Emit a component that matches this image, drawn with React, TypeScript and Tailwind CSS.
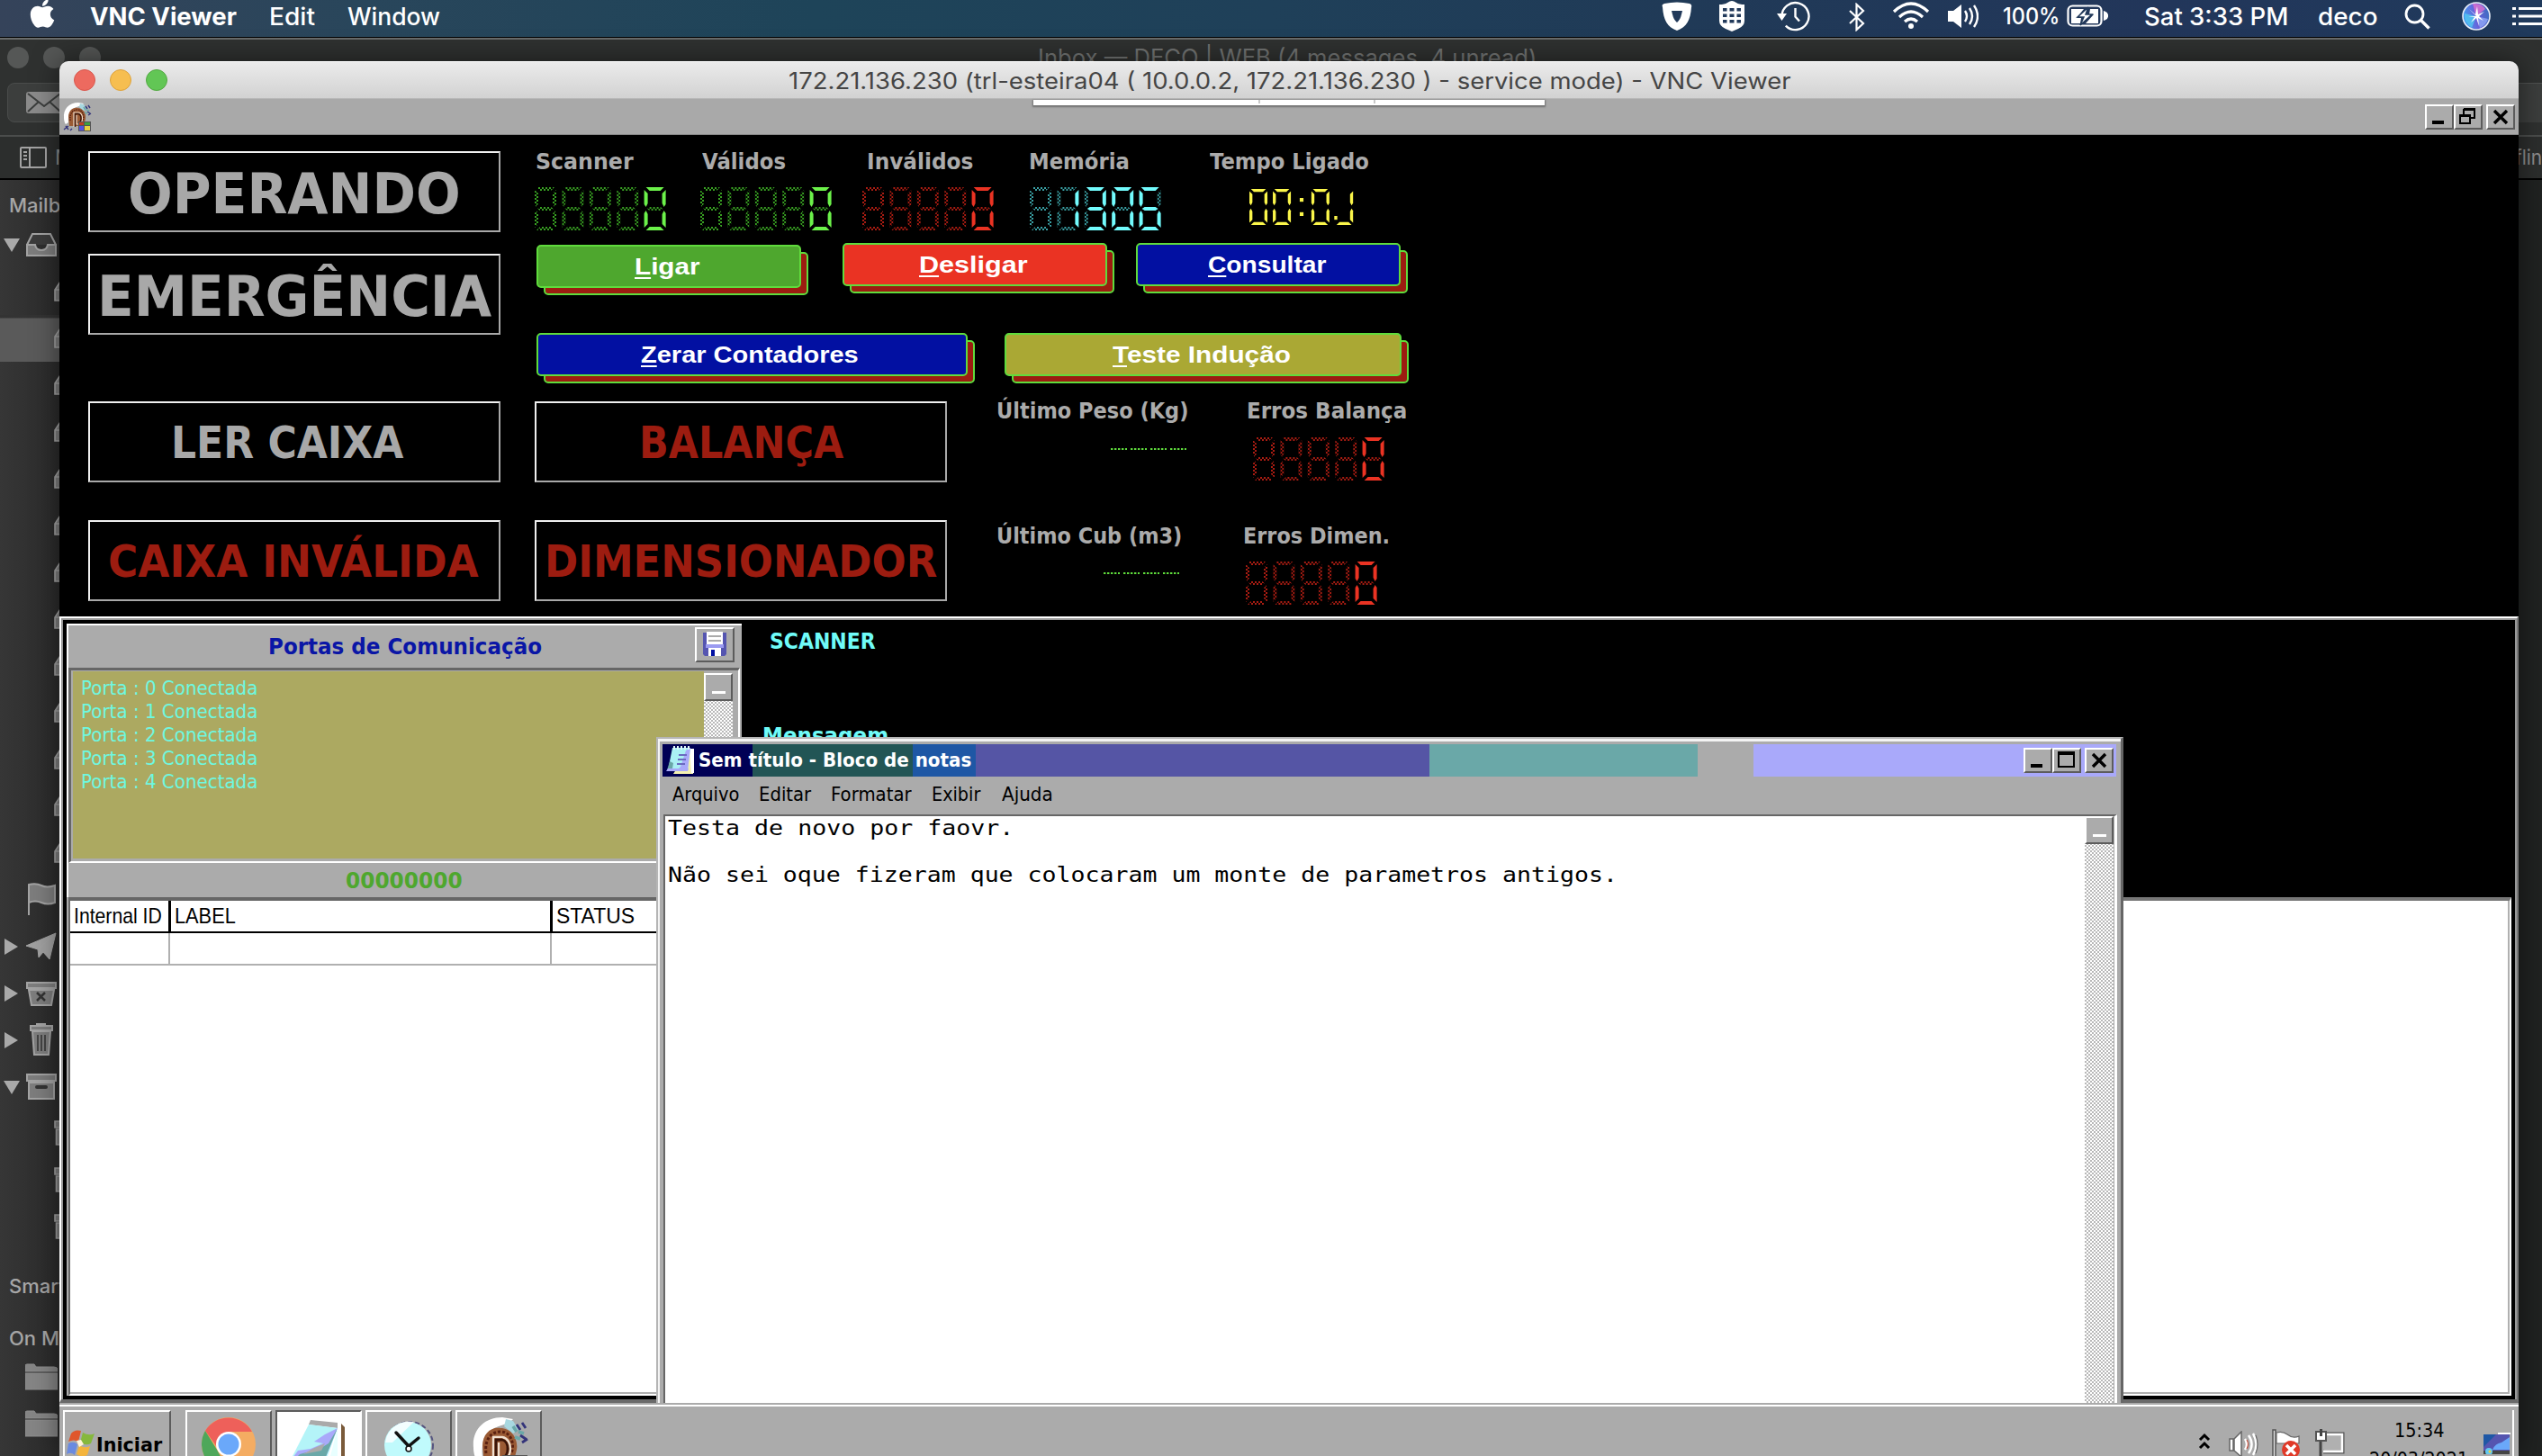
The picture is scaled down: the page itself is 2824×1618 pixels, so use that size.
import React, { useLayoutEffect, useRef, useState } from "react";
import { FaApple } from "react-icons/fa";

/* Text stretched horizontally to fill the width of its box. */
function Fit({ className = "", children }: { className?: string; children: React.ReactNode }) {
  const outer = useRef<HTMLSpanElement>(null);
  const inner = useRef<HTMLSpanElement>(null);
  const [scale, setScale] = useState(1);
  useLayoutEffect(() => {
    if (outer.current && inner.current && inner.current.offsetWidth > 0) {
      setScale(outer.current.clientWidth / inner.current.offsetWidth);
    }
  }, []);
  return (
    <span ref={outer} className={"block shrink-0 whitespace-nowrap " + className}>
      <span ref={inner} className="inline-block origin-left" style={{ transform: `scaleX(${scale})` }}>
        {children}
      </span>
    </span>
  );
}

const TAHOMA = "font-['DejaVu_Sans',sans-serif]";
const ARIAL = "font-['Liberation_Sans',sans-serif]";

/* ---------- seven segment displays ---------- */

const SEGMENTS: Record<string, string> = {
  a: "2,0 22,0 18,4 6,4",
  b: "24,3 24,19 22,22 20,18 20,7",
  c: "24,29 24,45 20,41 20,30 22,26",
  d: "6,44 18,44 22,48 2,48",
  e: "0,29 2,26 4,30 4,41 0,45",
  f: "0,3 4,7 4,18 2,22 0,19",
  g: "6,22 18,22 21,24 18,26 6,26 3,24",
};
const GLYPHS: Record<string, string> = {
  " ": "",
  "0": "abcdef",
  "1": "bc",
  "3": "abcdg",
  "6": "acdefg",
  J: "bcd",
};

function Digits({ value, on, off, className = "w-[147px] h-[48px]" }: { value: string; on: string; off: string; className?: string }) {
  const id = "dither" + off.slice(1);
  return (
    <svg viewBox="0 0 147 48" className={"block " + className} preserveAspectRatio="none">
      <defs>
        <pattern id={id} width="4" height="4" patternUnits="userSpaceOnUse">
          <rect width="2" height="2" fill={off} />
          <rect x="2" y="2" width="2" height="2" fill={off} />
        </pattern>
      </defs>
      {value.split("").map((ch, i) => (
        <g key={i} transform={`translate(${i * 30.4} 0)`}>
          {Object.keys(SEGMENTS).map((s) => (
            <polygon key={s} points={SEGMENTS[s]} fill={GLYPHS[ch].includes(s) ? on : `url(#${id})`} />
          ))}
        </g>
      ))}
    </svg>
  );
}

function Clock() {
  const cells: [number, string][] = [
    [0, "0"],
    [31.2, "0"],
    [82.5, "0"],
    [114, "J"],
  ];
  return (
    <svg viewBox="0 0 139 48" className="mt-[2px] ml-[44px] block h-[40px] w-[116px]" preserveAspectRatio="none">
      {cells.map(([x, ch]) => (
        <g key={x} transform={`translate(${x} 0)`} fill="#fbf64a">
          {GLYPHS[ch].split("").map((s) => (
            <polygon key={s} points={SEGMENTS[s]} />
          ))}
        </g>
      ))}
      <rect x="67" y="12" width="5" height="5" fill="#fbf64a" />
      <rect x="67" y="31" width="5" height="5" fill="#fbf64a" />
      <rect x="113" y="36" width="4" height="5" fill="#fbf64a" />
    </svg>
  );
}

function Dashes({ className }: { className: string }) {
  return (
    <svg viewBox="0 0 84 2" className={"block h-[2px] w-[84px] " + className}>
      {[0, 22, 44, 66].map((x) => (
        <path key={x} d={`M${x} 1h18`} stroke="#5fdc3c" strokeWidth="2" strokeDasharray="2.4 1.6" />
      ))}
    </svg>
  );
}

/* ---------- control panel pieces ---------- */

function Box({ className = "", children }: { className?: string; children: React.ReactNode }) {
  return (
    <div
      className={
        "flex h-[90px] w-[458px] shrink-0 items-center border-2 border-t-[#f0f0f0] border-r-[#a8a8a8] border-b-[#a8a8a8] border-l-[#f0f0f0] font-bold leading-[80px] " +
        TAHOMA +
        " " +
        className
      }
    >
      {children}
    </div>
  );
}

function Label({ className = "", children }: { className?: string; children: React.ReactNode }) {
  return <Fit className={"h-[30px] text-[25px] leading-[31px] font-bold text-[#ababab] " + TAHOMA + " " + className}>{children}</Fit>;
}

function PushButton({ face, pos = "", size, text, hot, rest }: { face: string; pos?: string; size: string; text: string; hot: string; rest: string }) {
  return (
    <div className={"relative h-[48px] shrink-0 " + size + " " + pos}>
      <div className={"absolute top-[8px] left-[8px] h-[48px] rounded-[5px] border-2 border-[#5fdc3c] bg-[#9c1c10] " + size} />
      <div className={"relative flex h-[48px] items-center rounded-[5px] border-2 border-[#5fdc3c] text-[26px] leading-[48px] font-bold text-white " + ARIAL + " " + size + " " + face}>
        <Fit className={text}>
          <span className="underline decoration-2 underline-offset-[3px]">{hot}</span>
          {rest}
        </Fit>
      </div>
    </div>
  );
}

const RAISED = "border-2 border-t-white border-l-white border-r-[#5c5c5c] border-b-[#5c5c5c] bg-[#ababab]";
const CHECKER = "bg-[repeating-conic-gradient(#ffffff_0_25%,#b8b8b8_0_50%)] bg-[length:4px_4px]";

function WinButton({ kind, className = "" }: { kind: "min" | "max" | "restore" | "close"; className?: string }) {
  return (
    <div className={"h-[28px] w-[32px] shrink-0 " + RAISED + " " + className}>
      <svg viewBox="0 0 28 24" className="block h-full w-full" fill="none" stroke="#000">
        {kind === "min" && <path d="M6 18h13" strokeWidth="4" />}
        {kind === "max" && (
          <>
            <rect x="5" y="3" width="17" height="16" strokeWidth="2" />
            <path d="M4 4h19" strokeWidth="4" />
          </>
        )}
        {kind === "restore" && (
          <>
            <path d="M9 9V4h12v9h-4M8 4h14" strokeWidth="2" />
            <path d="M9 3.5h13" strokeWidth="3" />
            <rect x="5" y="10" width="11" height="9" strokeWidth="2" />
            <path d="M4 10.500h13" strokeWidth="3" />
          </>
        )}
        {kind === "close" && <path d="M7 5l14 14M21 5L7 19" strokeWidth="3.400" />}
      </svg>
    </div>
  );
}

function ScrollButton() {
  return (
    <div className={"flex h-[31px] w-[32px] items-end justify-center pb-[6px] " + RAISED}>
      <div className="h-[3px] w-[15px] bg-white" />
    </div>
  );
}

/* White head silhouette around a brown swirl, with a small colour grid. */
function AppIcon({ className }: { className: string }) {
  return (
    <svg viewBox="0 0 32 32" className={className}>
      <path d="M17 0C7 0 0 7 1 17c0 3 1 6 2 7l3-2c-1-8 2-15 9-17l6-2 2-2z" fill="#fff" />
      <path d="M19 1l4 1 3 5-3 2-5-4z" fill="#a8d8e0" />
      <path d="M6 16C6 9 11 5 16 6c6 0 10 6 9 12l-2 8H7z" fill="#9a5a34" />
      <path d="M8 20c-1-8 3-12 8-12 6 0 8 7 6 12" fill="none" stroke="#5a2010" strokeWidth="1.500" strokeDasharray="1.500 1" />
      <path d="M12 27V11h5c6 1 6 12 0 13h-2V14" fill="none" stroke="#f0e0d0" strokeWidth="1.200" />
      <path d="M13.500 27V12.500h3.500c4 1 4 9 0 10" fill="none" stroke="#3a1408" strokeWidth="1.400" />
      <path d="M25 4l2 3M28 3l2 3M27 10l3 2M28 14l3-2M3 26l3 4M1 30l5-4M8 31l2-2" stroke="#33337a" strokeWidth="1.400" />
      <path d="M23 5l2 3M26 8l3 1M24 11l3 1" stroke="#6aa8a8" strokeWidth="1.800" />
      <rect x="17" y="21" width="14" height="11" fill="#555" />
      <rect x="18" y="26" width="5" height="5" fill="#5555e0" />
      <rect x="24" y="22" width="6" height="3" fill="#3fa040" />
      <rect x="24" y="26" width="6" height="5" fill="#e8d040" />
      <rect x="18" y="22" width="5" height="3" fill="#c04020" />
    </svg>
  );
}

/* ---------- macOS menu bar ---------- */

function MenuBar() {
  return (
    <div className="flex h-[42px] items-start border-b border-black bg-[linear-gradient(90deg,#35435a_0%,#29465b_14%,#1e4459_32%,#1f4059_50%,#203a57_66%,#22365a_85%,#203a5c_100%)] font-['Inter',sans-serif] text-[27px] leading-[37px] font-medium text-white">
      <FaApple className="-mt-[3px] ml-[29px] h-[36px] w-[36px] shrink-0" />
      <Fit className="ml-[35px] w-[163px] font-bold">VNC Viewer</Fit>
      <Fit className="ml-[36px] w-[51px]">Edit</Fit>
      <Fit className="ml-[36px] w-[103px]">Window</Fit>
      <svg viewBox="0 0 34 34" className="mt-[2px] ml-[1357px] h-[34px] w-[34px] shrink-0">
        <path d="M3 2Q17-1 31 2q3 1 2 4C32 20 28 28 17 32 6 28 2 20 1 6 0 3 1 3 3 2z" fill="#fff" />
        <path d="M11 10h12l-1 4c-1 4-2 6-5 9-3-3-4-5-5-9z" fill="#21395a" />
      </svg>
      <svg viewBox="0 0 30 36" className="ml-[29px] h-[36px] w-[30px] shrink-0">
        <path d="M1 5q6 0 9-2 3-2 5-2t5 2q3 2 9 2v18q0 6-7 9l-7 3-7-3q-7-3-7-9z" fill="#fff" />
        <path d="M5 9h4.500v3.500H5zM12.500 9h5v3.500h-5zM20.500 9H25v3.500h-4.500zM5 15.500h4.500V19H5zM12.500 15.500h5V19h-5zM20.500 15.500H25V19h-4.500zM5 22h4.500v3.500H5zM12.500 22h5v3.500h-5zM20.500 22H25v3.500h-4.500z" fill="#21395a" />
      </svg>
      <svg viewBox="0 0 38 34" className="mt-[1px] ml-[35px] h-[34px] w-[38px] shrink-0" fill="none" stroke="#fff" strokeWidth="2.400">
        <path d="M5.500 17A15 15 0 1 1 9.800 27.600" />
        <path d="M20.500 8v9.500l4.500 5" />
        <path d="M0 14h11l-5.500 8z" fill="#fff" stroke="none" />
      </svg>
      <svg viewBox="0 0 20 32" className="mt-[3px] ml-[41px] h-[32px] w-[20px] shrink-0" fill="none" stroke="#fff" strokeWidth="2.200">
        <path d="M2 9l15 14-7.500 7V2l7.500 7L2 23" />
      </svg>
      <svg viewBox="0 0 42 32" className="mt-[1px] ml-[29px] h-[32px] w-[42px] shrink-0" fill="none" stroke="#fff" strokeWidth="3.200">
        <path d="M2 12Q21-6 40 12M8 18q13-12 26 0M14 23q7-6 14 0" />
        <circle cx="21" cy="28" r="3" fill="#fff" stroke="none" />
      </svg>
      <svg viewBox="0 0 34 28" className="mt-[4px] ml-[20px] h-[28px] w-[34px] shrink-0" fill="none" stroke="#fff" strokeWidth="2.400">
        <path d="M0 8h6l9-7v26l-9-7H0z" fill="#fff" stroke="none" />
        <path d="M19 8q4 6 0 12M24 5q6 9 0 18M29 2q8 12 0 24" />
      </svg>
      <Fit className="ml-[27px] w-[63px] text-[25px]">100%</Fit>
      <svg viewBox="0 0 46 26" className="mt-[5px] ml-[8px] h-[26px] w-[46px] shrink-0" fill="none" stroke="#fff" strokeWidth="2.200">
        <rect x="1.500" y="1.500" width="37" height="22" rx="5" />
        <path d="M42 8.500q3 1 3 4t-3 4z" fill="#fff" />
        <path d="M5 5h14l-8 10h5l-1 6H5zM35 5h-9l-1 6h5l-9 10h14z" fill="#fff" stroke="none" />
        <path d="M24 3L12 14h7l-4 9 13-12h-7z" fill="#fff" stroke="#21395a" strokeWidth="1.500" />
      </svg>
      <Fit className="ml-[40px] w-[160px]">Sat 3:33 PM</Fit>
      <Fit className="ml-[33px] w-[66px]">deco</Fit>
      <svg viewBox="0 0 30 30" className="mt-[4px] ml-[30px] h-[30px] w-[30px] shrink-0" fill="none" stroke="#fff" strokeWidth="2.800">
        <circle cx="11.500" cy="11.500" r="9.500" />
        <path d="M18.500 18.500l9 9" strokeWidth="3.400" />
      </svg>
      <svg viewBox="0 0 32 32" className="mt-[2px] ml-[34px] h-[32px] w-[32px] shrink-0">
        <defs>
          <linearGradient id="siri" x1="0" y1="0.500" x2="1" y2="0.300">
            <stop offset="0" stopColor="#3f9ef0" />
            <stop offset="0.500" stopColor="#6a5fd8" />
            <stop offset="1" stopColor="#3a6fc0" />
          </linearGradient>
        </defs>
        <circle cx="16" cy="16" r="15" fill="url(#siri)" stroke="#e8eef8" strokeWidth="1.600" />
        <path d="M12 2q10-1 14 6l-10 8z" fill="#e070d0" opacity=".8" />
        <path d="M16 16L3 13q-1 10 8 16z" fill="#52c8f0" opacity=".8" />
        <path d="M16 16l4 13q7-3 9-10z" fill="#8fa8f8" opacity=".8" />
        <path d="M16 16L8 8l7 6 2-9 1 9 7-3-6 5 5 5-6-3 1 9-3-9-6 5 4-6-7-1z" fill="#fff" />
      </svg>
      <svg viewBox="0 0 34 24" className="mt-[7px] ml-[24px] h-[24px] w-[34px] shrink-0" stroke="#fff" strokeWidth="3">
        <path d="M0 2.500h4M7 2.500h27M0 11h4M7 11h27M0 19.500h4M7 19.500h27" />
      </svg>
    </div>
  );
}

/* ---------- mail window in the background ---------- */

function Caret({ dir }: { dir?: "down" | "right" }) {
  return (
    <svg viewBox="0 0 18 18" className="ml-[4px] h-[18px] w-[18px] shrink-0" fill="#a9a9a9">
      {dir === "down" && <path d="M0 2h18L9 17z" />}
      {dir === "right" && <path d="M1 0l15 9-15 9z" />}
    </svg>
  );
}

function SideIcon({ kind }: { kind: string }) {
  return (
    <svg viewBox="0 0 36 38" className="ml-[6px] h-[38px] w-[36px] shrink-0" fill="#7d7d7d" stroke="#a3a3a3" strokeWidth="2">
      {kind === "inbox" && (
        <>
          <path d="M2 19L8 7h20l6 12" fill="#3c3c3c" />
          <path d="M2 19h9q1 6 7 6t7-6h9v12H2z" />
        </>
      )}
      {kind === "flag" && <path d="M4 36V2q8-2 14 1t15 0v19q-8 3-15 0t-14 0" />}
      {kind === "plane" && <path d="M1 18L34 4l-7 29-7-8-5 6-1-9zM14 22L34 4" fill="#a0a0a0" strokeWidth="1" />}
      {kind === "junk" && (
        <>
          <path d="M2 7h32v6H2zM4 15h28l-3 17H7z" />
          <path d="M13 18l9 9M22 18l-9 9" stroke="#333" strokeWidth="2.500" />
        </>
      )}
      {kind === "trash" && (
        <>
          <path d="M13 3V1h9v2M6 3h24v5H6zM8 9h20l-2 26H10z" />
          <path d="M14 13v18M18 13v18M22 13v18" stroke="#444" />
        </>
      )}
      {kind === "archive" && (
        <>
          <path d="M2 5h32v7H2zM4 14h28v18H4z" />
          <path d="M13 19h10" stroke="#333" strokeWidth="4" strokeLinecap="round" />
        </>
      )}
      {kind === "folder" && <path d="M0 12V6q0-2 2-2h8l2 3h20q4 0 4 3v2zM0 14h36v18H0z" fill="#858585" stroke="#8e8e8e" strokeWidth="1" />}
    </svg>
  );
}

function SideRow({ caret, icon }: { caret?: "down" | "right"; icon: string }) {
  return (
    <div className="flex h-[52px] w-[66px] shrink-0 items-center overflow-hidden">
      <Caret dir={caret} />
      <SideIcon kind={icon} />
    </div>
  );
}

function SubRow({ selected, archive }: { selected?: boolean; archive?: boolean }) {
  return (
    <div className={"flex h-[52px] w-[66px] shrink-0 items-center justify-end " + (selected ? "bg-[linear-gradient(180deg,#333_3px,#5a5a5a_4px,#5a5a5a)]" : "")}>
      <svg viewBox="0 0 6 30" className="h-[30px] w-[6px]" fill="#7d7d7d" stroke="#a3a3a3" strokeWidth="1.600">
        {archive ? <path d="M8 1H1v7h7M8 10H2.500v17H8" /> : <path d="M7 4L1 13v12h7M1 13h6" />}
      </svg>
    </div>
  );
}

function MailWindow() {
  const heading = "ml-[10px] font-['Inter',sans-serif] text-[22px] leading-[30px] font-medium text-[#a6a6a6] whitespace-nowrap";
  return (
    <div className="flex h-[1576px] flex-col border-t-2 border-[#6a6c6b] bg-[#2f3130]">
      <div className="flex h-[46px] shrink-0 items-start justify-between">
        <div className="mt-[8px] ml-[8px] flex gap-[16px]">
          <div className="h-[24px] w-[24px] rounded-full bg-[#555756]" />
          <div className="h-[24px] w-[24px] rounded-full bg-[#555756]" />
          <div className="h-[24px] w-[24px] rounded-full bg-[#555756]" />
        </div>
        <Fit className="mt-[5px] mr-[1117px] w-[554px] font-['Inter',sans-serif] text-[25px] leading-[30px] text-[#727473]">Inbox — DECO | WEB (4 messages, 4 unread)</Fit>
      </div>
      <div className="mt-[2px] flex h-[44px] shrink-0 justify-between">
        <div className="ml-[8px] flex w-[80px] items-center rounded-l-[8px] border border-[#4a4c4b] bg-[#3c3e3d] pl-[20px]">
          <svg viewBox="0 0 40 24" className="h-[24px] w-[40px]">
            <rect width="40" height="24" rx="3" fill="#8b8b8b" />
            <path d="M2 2l18 14L38 2M2 22l12-11M38 22L26 11" fill="none" stroke="#3c3e3d" strokeWidth="2" />
          </svg>
        </div>
        <div className="w-[80px] border-t border-[#505251] bg-[#3c3e3d]" />
      </div>
      <div className="mt-[14px] flex h-[50px] shrink-0 items-center justify-between border-t-2 border-b-2 border-t-[#4b4d4c] border-b-black bg-[#2c2e2d] font-['Inter',sans-serif] text-[23px] text-[#8c8c8c]">
        <div className="flex items-center gap-[9px] pl-[22px]">
          <svg viewBox="0 0 30 24" className="h-[24px] w-[30px]" fill="none" stroke="#a3a3a3" strokeWidth="2">
            <rect x="1" y="1" width="28" height="22" rx="1" />
            <path d="M11 1v22M4 6h4M4 10h4M4 14h4" />
          </svg>
          <span>M</span>
        </div>
        <Fit className="w-[30px]">flin</Fit>
      </div>
      <div className="flex flex-1">
        <div className="flex w-[66px] flex-col overflow-hidden bg-[linear-gradient(90deg,#363636,#2b2b2b)]">
          <div className="h-[46px] shrink-0 pt-[13px]">
            <div className={heading}>Mailboxes</div>
          </div>
          <SideRow caret="down" icon="inbox" />
          <SubRow />
          <SubRow selected />
          {Array.from({ length: 11 }, (_, i) => (
            <SubRow key={i} />
          ))}
          <SideRow icon="flag" />
          <SideRow caret="right" icon="plane" />
          <SideRow caret="right" icon="junk" />
          <SideRow caret="right" icon="trash" />
          <SideRow caret="down" icon="archive" />
          <SubRow archive />
          <SubRow archive />
          <SubRow archive />
          <div className={"mt-[24px] shrink-0 " + heading}>Smart Mailboxes</div>
          <div className={"mt-[28px] shrink-0 " + heading}>On My Mac</div>
          <div className="h-[3px] shrink-0" />
          <SideRow icon="folder" />
          <SideRow icon="folder" />
        </div>
        <div className="flex-1 bg-[#202221]" />
      </div>
    </div>
  );
}

/* ---------- control panel ---------- */

function ControlPanel() {
  const gray = "text-[#a8a8a8]";
  const red = "text-[#9c1c10]";
  return (
    <div className="flex h-[535px] shrink-0 bg-black pl-[32px]">
      <div className="w-[458px] shrink-0 pt-[18px]">
        <Box className={"pt-[5px] pl-[42px] text-[63px] " + gray}>
          <Fit className="w-[370px]">OPERANDO</Fit>
        </Box>
        <Box className={"mt-[24px] pt-[5px] pl-[8px] text-[63px] " + gray}>
          <Fit className="w-[438px]">EMERGÊNCIA</Fit>
        </Box>
        <Box className={"mt-[74px] pt-[3px] pl-[90px] text-[49px] " + gray}>
          <Fit className="w-[258px]">LER CAIXA</Fit>
        </Box>
        <Box className={"mt-[42px] pt-[3px] pl-[20px] text-[49px] " + red}>
          <Fit className="w-[412px]">CAIXA INVÁLIDA</Fit>
        </Box>
      </div>
      <div className="ml-[38px] flex flex-col">
        <div className="mt-[14px] grid h-[106px] grid-cols-[184px_180px_186px_200px_200px] grid-rows-[44px_48px]">
          <Label className="ml-px w-[109px]">Scanner</Label>
          <Label className="ml-[2px] w-[93px]">Válidos</Label>
          <Label className="ml-[5px] w-[118px]">Inválidos</Label>
          <Label className="-ml-px w-[112px]">Memória</Label>
          <Label className="w-[177px]">Tempo Ligado</Label>
          <Digits value="    0" on="#6cf24a" off="#38a022" />
          <Digits value="    0" on="#6cf24a" off="#38a022" />
          <Digits value="    0" on="#ea3323" off="#a81c12" />
          <Digits value=" 1306" on="#72fbfd" off="#3aa0a4" />
          <Clock />
        </div>
        <div className="ml-[2px] flex h-[100px]">
          <PushButton face="bg-[#4ea72e]" pos="mt-[2px]" size="w-[294px]" text="ml-[107px] w-[73px]" hot="L" rest="igar" />
          <PushButton face="bg-[#ea3323]" pos="ml-[46px]" size="w-[294px]" text="ml-[83px] w-[121px]" hot="D" rest="esligar" />
          <PushButton face="bg-[#0210a2]" pos="ml-[32px]" size="w-[294px]" text="ml-[78px] w-[131px]" hot="C" rest="onsultar" />
        </div>
        <div className="ml-[2px] flex h-[76px]">
          <PushButton face="bg-[#0210a2]" size="w-[479px]" text="ml-[114px] w-[242px]" hot="Z" rest="erar Contadores" />
          <PushButton face="bg-[#aaa834]" pos="ml-[41px]" size="w-[441px]" text="ml-[118px] w-[198px]" hot="T" rest="este Indução" />
        </div>
        <div className="flex h-[132px]">
          <Box className={"pt-[3px] pl-[114px] text-[49px] " + red}>
            <Fit className="w-[227px]">BALANÇA</Fit>
          </Box>
          <div className="-mt-[5px] ml-[55px] w-[278px]">
            <Label className="w-[213px]">Último Peso (Kg)</Label>
            <Dashes className="mt-[27px] ml-[127px]" />
          </div>
          <div className="-mt-[5px]">
            <Label className="w-[178px]">Erros Balança</Label>
            <Digits value="    0" on="#ea3323" off="#a81c12" className="mt-[15px] ml-[7px] h-[48px] w-[147px]" />
          </div>
        </div>
        <div className="flex">
          <Box className={"pt-[3px] pl-[9px] text-[49px] " + red}>
            <Fit className="w-[436px]">DIMENSIONADOR</Fit>
          </Box>
          <div className="mt-[2px] ml-[55px] w-[273px]">
            <Label className="w-[206px]">Último Cub (m3)</Label>
            <Dashes className="mt-[26px] ml-[119px]" />
          </div>
          <div className="mt-[2px]">
            <Label className="ml-px w-[163px]">Erros Dimen.</Label>
            <Digits value="    0" on="#ea3323" off="#a81c12" className="mt-[14px] ml-[4px] h-[48px] w-[147px]" />
          </div>
        </div>
      </div>
    </div>
  );
}

/* ---------- ports panel, table and message list ---------- */

function PortsPanel() {
  return (
    <div className="flex h-[858px] w-[750px] shrink-0 flex-col bg-[#ababab]">
      <div className="flex h-[304px] flex-col border-t-2 border-l-2 border-white">
        <div className="flex h-[47px] shrink-0 items-center">
          <Fit className={"ml-[222px] w-[304px] text-[25px] leading-[40px] font-bold text-[#0a16a6] " + TAHOMA}>Portas de Comunicação</Fit>
          <div className={"-mt-[5px] ml-[170px] flex h-[39px] w-[44px] items-center justify-center " + RAISED}>
            <svg viewBox="0 0 26 28" className="h-[28px] w-[26px]">
              <path d="M0 1h4v12h18V1h4v24l-2 2H2l-2-2z" fill="#5555b0" />
              <rect x="4" width="18" height="14" fill="#fff" />
              <path d="M6 5h14M6 10h14" stroke="#aaa" strokeWidth="2" />
              <rect x="3" y="14" width="20" height="4" fill="#9a9af0" />
              <rect x="6" y="18" width="14" height="9" fill="#fff" />
              <rect x="9" y="20" width="4" height="7" fill="#0210a2" />
            </svg>
          </div>
        </div>
        <div className="mr-[2px] flex h-[217px] shrink-0 border-t-[3px] border-r-2 border-b-2 border-l-[3px] border-t-[#666] border-r-white border-b-white border-l-[#666]">
          <div className="mt-[1px] mb-[3px] ml-[2px] flex-1 bg-[#aca961] pt-[6px] pl-[9px]">
            {[0, 1, 2, 3, 4].map((n) => (
              <Fit key={n} className={"w-[196px] text-[22px] leading-[26px] text-[#6ef8e0] " + TAHOMA}>
                Porta : {n} Conectada
              </Fit>
            ))}
          </div>
          <div className={"mt-[3px] mr-[6px] w-[32px] " + CHECKER}>
            <ScrollButton />
          </div>
        </div>
        <Fit className={"ml-[308px] w-[130px] text-[24px] leading-[40px] font-bold text-[#4ea72e] " + TAHOMA}>00000000</Fit>
      </div>
      <div className="ml-[2px] flex flex-1 flex-col border-t-[4px] border-b-2 border-l-2 border-t-[#666] border-b-white border-l-[#666] bg-white">
        <div className={"flex h-[36px] shrink-0 border-b-2 border-black text-[24px] leading-[33px] text-black " + ARIAL}>
          <div className="w-[112px] border-r-[3px] border-black pl-[4px]">
            <Fit className="w-[98px]">Internal ID</Fit>
          </div>
          <div className="w-[424px] border-r-[3px] border-black pl-[4px]">
            <Fit className="w-[68px]">LABEL</Fit>
          </div>
          <div className="pl-[4px]">
            <Fit className="w-[87px]">STATUS</Fit>
          </div>
        </div>
        <div className="flex h-[36px] shrink-0 border-b-2 border-[#b0b0b0]">
          <div className="w-[111px] border-r-2 border-[#b0b0b0]" />
          <div className="w-[424px] border-r-2 border-[#b0b0b0]" />
        </div>
        <div className="flex-1 border-b-2 border-[#b0b0b0]" />
      </div>
    </div>
  );
}

function Notepad() {
  return (
    <div className="absolute top-[134px] left-[663px] flex h-[740px] w-[1630px] flex-col border-t-2 border-r-[3px] border-l-2 border-t-[#b5b5b5] border-r-[#666] border-l-[#b5b5b5] bg-[#ababab]">
      <div className="flex flex-1 flex-col border-t-[3px] border-l-2 border-[#f4f4f4] pl-[3px]">
        <div className="mt-[3px] mr-[5px] flex h-[36px] shrink-0 items-center bg-[linear-gradient(90deg,#000055_100px,#225555_100px_278px,#1e57a5_278px_348px,#5555a5_348px_852px,#6aa8a8_852px_1150px,#ababab_1150px_1212px,#a9a9fa_1212px)]">
          <svg viewBox="0 0 32 34" className="ml-[4px] h-[34px] w-[32px] shrink-0">
            <path d="M8 32h22V4h-4z" fill="#f4f0b0" />
            <path d="M26 4h5v27h-3z" fill="#fff" />
            <path d="M2 28L7 3h20l-3 25z" fill="#aaf0f4" />
            <path d="M27 3l-3 25H12l4-4 6-18z" fill="#a9a9fa" />
            <path d="M4 18l-3 10 6-2 1-6z" fill="#6aa8a8" />
            <path d="M0 29h24l1-3H2z" fill="#a9a9fa" />
            <path d="M14 11h9M13 16h9M12 21h9" stroke="#6a6ac0" strokeWidth="2" />
            <path d="M9 5V1M13 5V1M17 5V1M21 5V1M25 5V1" stroke="#e0f8f8" strokeWidth="2" />
          </svg>
          <Fit className={"ml-[4px] w-[303px] text-[21px] leading-[34px] font-bold text-white " + TAHOMA}>Sem título - Bloco de notas</Fit>
          <div className="mr-[3px] ml-auto flex">
            <WinButton kind="min" />
            <WinButton kind="max" />
            <WinButton kind="close" className="ml-[4px]" />
          </div>
        </div>
        <div className={"flex h-[42px] shrink-0 pt-[3px] text-[21px] leading-[34px] text-black " + TAHOMA}>
          <Fit className="ml-[11px] w-[74px]">Arquivo</Fit>
          <Fit className="ml-[22px] w-[58px]">Editar</Fit>
          <Fit className="ml-[22px] w-[90px]">Formatar</Fit>
          <Fit className="ml-[22px] w-[54px]">Exibir</Fit>
          <Fit className="ml-[24px] w-[57px]">Ajuda</Fit>
        </div>
        <div className="mr-[4px] ml-[1px] flex flex-1 border-t-2 border-r-[3px] border-l-2 border-t-[#666] border-r-white border-l-[#666]">
          <div className="flex-1 bg-white pl-[3px] font-['DejaVu_Sans_Mono',monospace] text-[23px] leading-[26px] text-black">
            <Fit className="w-[384px]">Testa de novo por faovr.</Fit>
            <div className="h-[26px]" />
            <Fit className="w-[1055px]">Não sei oque fizeram que colocaram um monte de parametros antigos.</Fit>
          </div>
          <div className={"mr-[1px] w-[32px] " + CHECKER}>
            <ScrollButton />
          </div>
        </div>
      </div>
    </div>
  );
}

function LowerArea() {
  return (
    <div className="relative flex h-[874px] shrink-0 border-t-2 border-r-2 border-b-[4px] border-l-2 border-t-white border-r-[#777] border-b-[#6a6a6a] border-l-white bg-black">
      <div className="flex flex-1 border-t-2 border-r-2 border-l-2 border-[#999] p-[4px]">
        <PortsPanel />
        <div className={"flex flex-1 flex-col text-[24px] leading-[30px] font-bold text-[#6ffbf8] " + TAHOMA}>
          <div className="h-[304px] shrink-0">
            <Fit className="mt-[5px] ml-[31px] w-[118px]">SCANNER</Fit>
            <Fit className="mt-[75px] ml-[23px] w-[140px]">Mensagem</Fit>
          </div>
          <div className="flex-1 border-t-[4px] border-r-2 border-b-2 border-t-[#777] border-r-white border-b-white">
            <div className="h-full border-r-2 border-b-2 border-[#b0b0b0] bg-white" />
          </div>
        </div>
      </div>
      <div className="absolute -top-[2px] -left-[2px]">
        <Notepad />
      </div>
    </div>
  );
}

/* ---------- taskbar ---------- */

function Taskbar() {
  return (
    <div className="flex h-[59px] shrink-0 overflow-hidden bg-[#ababab] pt-[2px]">
      <div className="flex flex-1 items-start border-t-2 border-white pt-[4px]">
        <div className={"ml-[4px] flex h-[60px] w-[120px] shrink-0 items-start " + RAISED}>
          <svg viewBox="0 0 32 32" className="mt-[19px] ml-[2px] h-[32px] w-[32px]">
            <path d="M5 5q4-5 11-3l-3 12q-5-3-11 0z" fill="#e0562c" />
            <path d="M18 4q7 4 13 1l-4 11q-6 3-12-1z" fill="#86b83c" />
            <path d="M2 16q6-3 10 1l-3 12q-4-4-9-1z" fill="#6a8ae0" />
            <path d="M14 18q6 4 12 1l-3 10q-6 3-12-1z" fill="#f4b43c" />
            <path d="M11 13l5-1 3 5-5 3z" fill="#fff4d8" />
          </svg>
          <Fit className={"mt-[20px] ml-[1px] w-[73px] text-[21px] leading-[34px] font-bold text-black " + TAHOMA}>Iniciar</Fit>
        </div>
        <div className={"ml-[16px] h-[60px] w-[96px] shrink-0 " + RAISED}>
          <svg viewBox="0 0 60 60" className="mt-[6px] ml-[16px] h-[60px] w-[60px]">
            <circle cx="30" cy="30" r="30" fill="#f4ac62" />
            <path d="M4 15A30 30 0 0 1 56 16H30L17 33z" fill="#ee605a" />
            <path d="M4 15L17 36 30 60A30 30 0 0 1 4 15z" fill="#4ea75a" />
            <circle cx="30" cy="30" r="14" fill="#fff" />
            <circle cx="30" cy="30" r="11.500" fill="#6aa8fa" />
          </svg>
        </div>
        <div className="ml-[4px] h-[60px] w-[96px] shrink-0 border-2 border-t-[#5c5c5c] border-r-white border-l-[#5c5c5c] bg-white">
          <svg viewBox="0 0 64 48" className="mt-[9px] ml-[13px] h-[48px] w-[64px]">
            <path d="M24 2l34 2v44h4V8l-4-4z" fill="#7a5a3a" />
            <path d="M24 0l30 3v6L22 5z" fill="#aaa" />
            <path d="M22 5l32 4-14 39H0z" fill="#b4f4f8" />
            <path d="M54 9L40 16 28 24l10 2-14 6-14 2L0 48h38z" fill="#a9a9fa" />
            <path d="M54 9L44 26 34 32 12 38 2 48h36z" fill="#6aa8a8" />
            <path d="M26 32l14-6-4 8-20 4z" fill="#aaa" />
            <path d="M54 9v39H44z" fill="#e8ffff" />
          </svg>
        </div>
        <div className={"ml-[4px] h-[60px] w-[96px] shrink-0 " + RAISED}>
          <svg viewBox="0 0 56 56" className="mt-[8px] ml-[18px] h-[56px] w-[56px]">
            <circle cx="29" cy="29" r="26" fill="none" stroke="#555580" strokeWidth="2" strokeDasharray="5 3" />
            <circle cx="27" cy="29" r="26" fill="#c0fafc" />
            <path d="M14 7a26 26 0 0 1 20-4L10 26H2q2-13 12-19z" fill="#fff" opacity=".8" />
            <path d="M14 15l14 15 11-9M28 30v4" fill="none" stroke="#111" strokeWidth="3.500" strokeLinecap="round" />
            <circle cx="28" cy="33" r="3" fill="#fff" stroke="#111" strokeWidth="1.500" />
          </svg>
        </div>
        <div className={"ml-[4px] h-[60px] w-[96px] shrink-0 " + RAISED}>
          <AppIcon className="mt-[6px] ml-[16px] h-[64px] w-[64px]" />
        </div>
        <svg viewBox="0 0 14 20" className="mt-[25px] ml-[1840px] h-[20px] w-[14px] shrink-0" fill="none" stroke="#000" strokeWidth="3">
          <path d="M2 8l5-5 5 5M2 17l5-5 5 5" />
        </svg>
        <svg viewBox="0 0 34 30" className="mt-[23px] ml-[19px] h-[30px] w-[34px] shrink-0">
          <path d="M2 9h4v13H2zM7 9l8-8v28l-8-7z" fill="#fff" stroke="#666" strokeWidth="1.500" />
          <path d="M19 9q4 6 0 12M23 5q7 10 0 20M28 3q7 12 0 24" fill="none" stroke="#fff" strokeWidth="2.500" />
          <path d="M21 10q3 5 0 10" fill="none" stroke="#c05040" strokeWidth="1.200" />
          <path d="M31 5q4 10 0 20" fill="none" stroke="#666" strokeWidth="1.200" />
        </svg>
        <svg viewBox="0 0 34 30" className="mt-[21px] ml-[14px] h-[30px] w-[34px] shrink-0">
          <path d="M2 30V1h3v29" fill="#ddd" stroke="#555" strokeWidth="1.500" />
          <path d="M6 4q7-2 12 2 6 5 13 2v8H6z" fill="#fff" stroke="#666" strokeWidth="1.200" />
          <circle cx="22" cy="23" r="10" fill="#e03a28" />
          <path d="M17 18l10 10M27 18L17 28" stroke="#fff" strokeWidth="3.500" />
        </svg>
        <svg viewBox="0 0 34 30" className="mt-[21px] ml-[14px] h-[30px] w-[34px] shrink-0">
          <path d="M12 6h19v19H10" fill="#b8b8b8" stroke="#555" strokeWidth="5" />
          <path d="M12 6h19v19H10" fill="#b0b0b0" stroke="#fff" strokeWidth="2.500" />
          <path d="M2 3h11v10H2z" fill="#fff" stroke="#555" strokeWidth="2" />
          <path d="M7.500 0v8M7 14v16" stroke="#444" strokeWidth="3" />
        </svg>
        <div className={"ml-[27px] flex shrink-0 flex-col pt-[8px] text-[21px] leading-[30px] text-black " + TAHOMA}>
          <Fit className="ml-[28px] w-[56px]">15:34</Fit>
          <Fit className="mt-[2px] w-[110px]">20/03/2021</Fit>
        </div>
        <svg viewBox="0 0 30 24" className="mt-[25px] ml-[17px] h-[24px] w-[30px] shrink-0">
          <path d="M0 2h29v18H0z" fill="#5555b0" />
          <path d="M0 2h14L0 16z" fill="#1e57a5" />
          <path d="M29 5v14H10q3-7 10-8z" fill="#6aa8fa" />
          <path d="M16 1h14" stroke="#fff" strokeWidth="2" />
          <path d="M0 20h29v4H0z" fill="#444" />
          <circle cx="6" cy="21" r="4" fill="#62c8f0" />
          <circle cx="7" cy="21" r="1.500" fill="#f0d040" />
        </svg>
        <div className="ml-[2px] h-[60px] w-[2px] shrink-0 bg-white" />
      </div>
    </div>
  );
}

function VncWindow() {
  return (
    <div className="absolute top-[68px] left-[66px] flex h-[1550px] w-[2732px] flex-col overflow-hidden rounded-t-[10px] shadow-[0_0_30px_rgba(0,0,0,0.5)]">
      <div className="flex h-[42px] shrink-0 items-center border-t border-b border-t-white border-b-[#b8b8b8] bg-[linear-gradient(180deg,#ebebeb,#d2d2d2)]">
        <div className="ml-[16px] flex gap-[16px]">
          <div className="h-[24px] w-[24px] rounded-full border border-[#d8564c] bg-[#ed6a5f]" />
          <div className="h-[24px] w-[24px] rounded-full border border-[#dda23c] bg-[#f6be50]" />
          <div className="h-[24px] w-[24px] rounded-full border border-[#52a842] bg-[#62c655]" />
        </div>
        <Fit className="ml-[690px] w-[1114px] pt-[3px] font-['Inter',sans-serif] text-[25px] leading-[37px] text-[#454545]">
          172.21.136.230 (trl-esteira04 ( 10.0.0.2, 172.21.136.230 ) - service mode) - VNC Viewer
        </Fit>
      </div>
      <div className="relative flex h-[40px] shrink-0 items-center border-b border-[#888] bg-[#a9a9a9]">
        <AppIcon className="ml-[4px] h-[32px] w-[32px]" />
        <div className="mr-[4px] ml-auto flex">
          <WinButton kind="min" />
          <WinButton kind="restore" />
          <WinButton kind="close" className="ml-[4px]" />
        </div>
        <div className="absolute top-[1px] left-[1082px] flex h-[6px] w-[568px] bg-white shadow-[0_1px_2px_1px_rgba(90,90,90,0.7)]">
          <div className="h-[4px] w-[252px] border-r-2 border-[#c8c8c8]" />
          <div className="h-[4px] w-[128px] border-r-2 border-[#c8c8c8]" />
        </div>
      </div>
      <ControlPanel />
      <LowerArea />
      <Taskbar />
    </div>
  );
}

export default function App() {
  return (
    <div className="relative h-[1618px] w-[2824px] overflow-hidden bg-black">
      <MenuBar />
      <MailWindow />
      <VncWindow />
    </div>
  );
}
